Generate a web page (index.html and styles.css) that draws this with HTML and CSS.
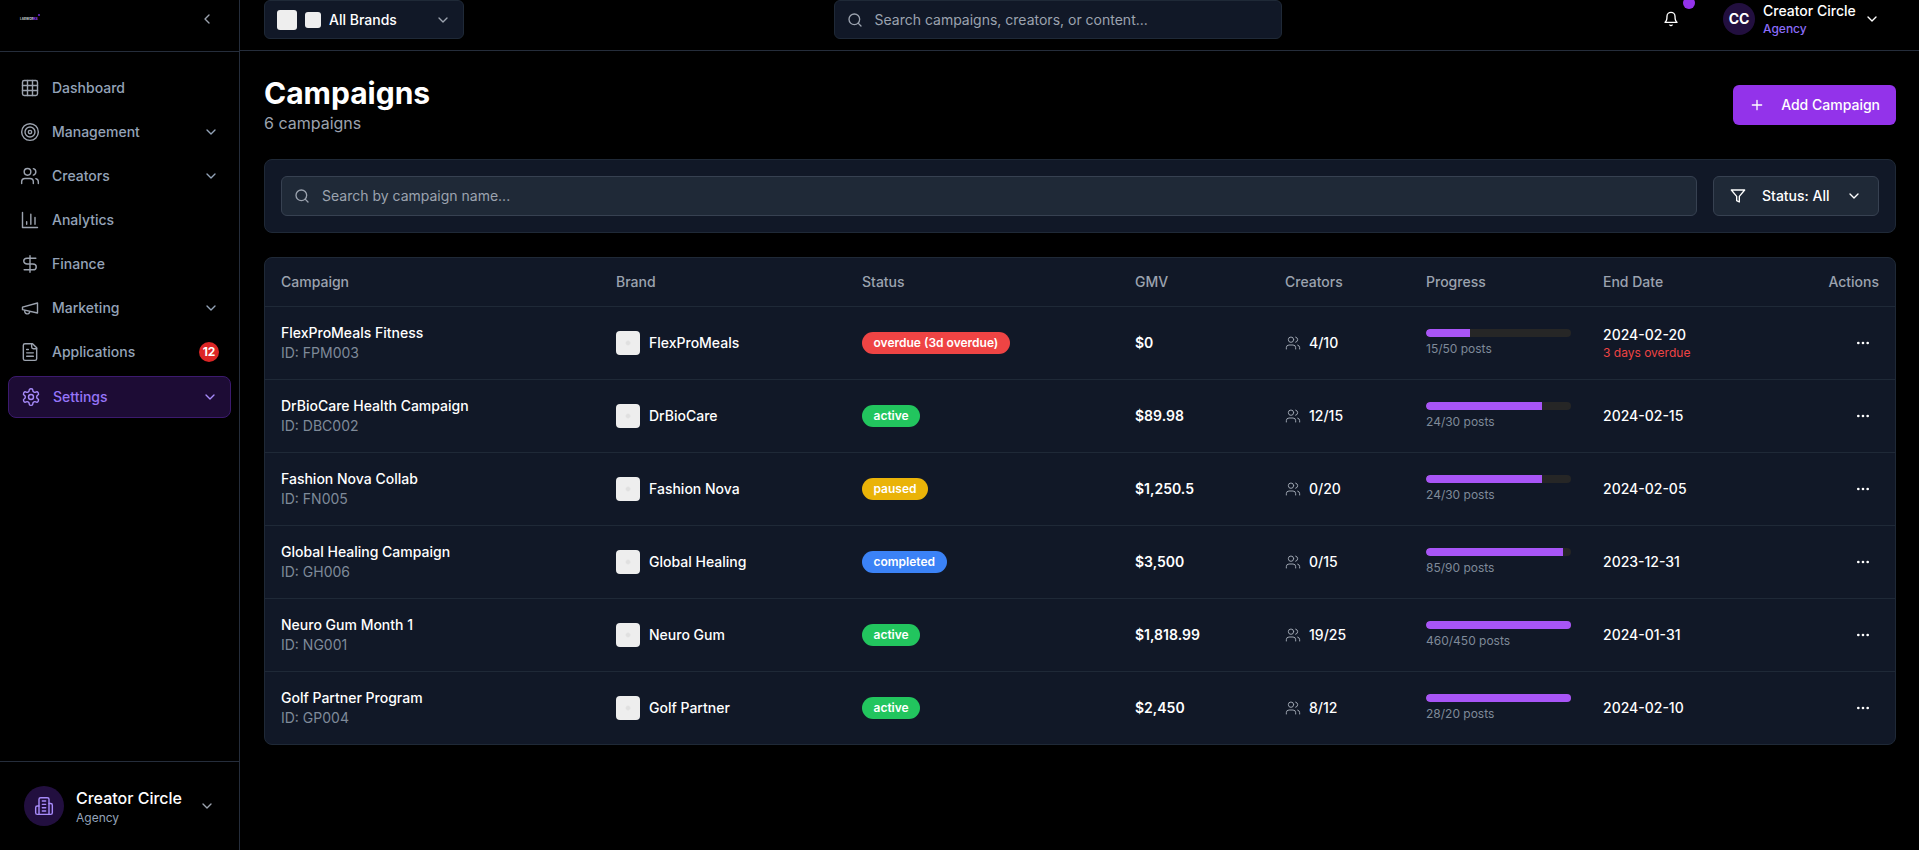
FILE: index.html
```html
<!DOCTYPE html>
<html lang="en">
<head>
<meta charset="utf-8">
<title>Campaigns</title>
<link rel="stylesheet" href="styles.css">
</head>
<body>
<svg class="defs" aria-hidden="true">
  <symbol id="i-grid" viewBox="0 0 24 24"><rect x="3" y="3" width="18" height="18" rx="2"/><path d="M3 9h18M3 15h18M9 3v18M15 3v18"/></symbol>
  <symbol id="i-target" viewBox="0 0 24 24"><circle cx="12" cy="12" r="10"/><circle cx="12" cy="12" r="6"/><circle cx="12" cy="12" r="2"/></symbol>
  <symbol id="i-users" viewBox="0 0 24 24"><path d="M16 21v-2a4 4 0 0 0-4-4H6a4 4 0 0 0-4 4v2"/><circle cx="9" cy="7" r="4"/><path d="M22 21v-2a4 4 0 0 0-3-3.87"/><path d="M16 3.13a4 4 0 0 1 0 7.75"/></symbol>
  <symbol id="i-chart" viewBox="0 0 24 24"><path d="M3 3v18h18"/><path d="M18 17V9M13 17V5M8 17v-3"/></symbol>
  <symbol id="i-dollar" viewBox="0 0 24 24"><path d="M12 2v20"/><path d="M19 5H8.5a4 3.5 0 0 0 0 7h7a4 3.5 0 0 1 0 7H5"/></symbol>
  <symbol id="i-mega" viewBox="0 0 24 24"><path d="m3 11 18-5v12L3 14v-3z"/><path d="M11.6 16.8a3 3 0 1 1-5.8-1.6"/></symbol>
  <symbol id="i-file" viewBox="0 0 24 24"><path d="M15 2H6a2 2 0 0 0-2 2v16a2 2 0 0 0 2 2h12a2 2 0 0 0 2-2V7Z"/><path d="M14 2v4a2 2 0 0 0 2 2h4"/><path d="M10 9H8M16 13H8M16 17H8"/></symbol>
  <symbol id="i-gear" viewBox="0 0 24 24"><path d="M12.22 2h-.44a2 2 0 0 0-2 2v.18a2 2 0 0 1-1 1.73l-.43.25a2 2 0 0 1-2 0l-.15-.08a2 2 0 0 0-2.73.73l-.22.38a2 2 0 0 0 .73 2.73l.15.1a2 2 0 0 1 1 1.72v.51a2 2 0 0 1-1 1.74l-.15.09a2 2 0 0 0-.73 2.73l.22.38a2 2 0 0 0 2.73.73l.15-.08a2 2 0 0 1 2 0l.43.25a2 2 0 0 1 1 1.73V20a2 2 0 0 0 2 2h.44a2 2 0 0 0 2-2v-.18a2 2 0 0 1 1-1.73l.43-.25a2 2 0 0 1 2 0l.15.08a2 2 0 0 0 2.73-.73l.22-.39a2 2 0 0 0-.73-2.73l-.15-.08a2 2 0 0 1-1-1.74v-.5a2 2 0 0 1 1-1.74l.15-.09a2 2 0 0 0 .73-2.73l-.22-.38a2 2 0 0 0-2.73-.73l-.15.08a2 2 0 0 1-2 0l-.43-.25a2 2 0 0 1-1-1.73V4a2 2 0 0 0-2-2z"/><circle cx="12" cy="12" r="3"/></symbol>
  <symbol id="i-down" viewBox="0 0 24 24"><path d="m6 9 6 6 6-6"/></symbol>
  <symbol id="i-left" viewBox="0 0 24 24"><path d="m15 18-6-6 6-6"/></symbol>
  <symbol id="i-search" viewBox="0 0 24 24"><circle cx="11" cy="11" r="8"/><path d="m21 21-4.3-4.3"/></symbol>
  <symbol id="i-bell" viewBox="0 0 24 24"><path d="M6 8a6 6 0 0 1 12 0c0 7 3 9 3 9H3s3-2 3-9"/><path d="M10.3 21a1.94 1.94 0 0 0 3.4 0"/></symbol>
  <symbol id="i-filter" viewBox="0 0 24 24"><path d="M22 3H2l8 9.46V19l4 2v-8.54L22 3z"/></symbol>
  <symbol id="i-plus" viewBox="0 0 24 24"><path d="M5 12h14M12 5v14"/></symbol>
  <symbol id="i-more" viewBox="0 0 24 24"><circle cx="5" cy="12" r="1"/><circle cx="12" cy="12" r="1"/><circle cx="19" cy="12" r="1"/></symbol>
  <symbol id="i-building" viewBox="0 0 24 24"><path d="M6 22V4a2 2 0 0 1 2-2h8a2 2 0 0 1 2 2v18Z"/><path d="M6 12H4a2 2 0 0 0-2 2v6a2 2 0 0 0 2 2h2"/><path d="M18 9h2a2 2 0 0 1 2 2v9a2 2 0 0 1-2 2h-2"/><path d="M10 6h4M10 10h4M10 14h4M10 18h4"/></symbol>
</svg>

<div class="app">
  <aside class="sidebar">
    <div class="side-head">
      <div class="logo"><span class="logo-dot"></span><span class="logo-text">LABWOR<b>KS</b></span></div>
      <svg class="ic16 muted"><use href="#i-left"/></svg>
    </div>
    <nav class="nav">
      <a class="nav-item"><svg class="ic20"><use href="#i-grid"/></svg><span class="nav-label">Dashboard</span></a>
      <a class="nav-item"><svg class="ic20"><use href="#i-target"/></svg><span class="nav-label">Management</span><svg class="ic16"><use href="#i-down"/></svg></a>
      <a class="nav-item"><svg class="ic20"><use href="#i-users"/></svg><span class="nav-label">Creators</span><svg class="ic16"><use href="#i-down"/></svg></a>
      <a class="nav-item"><svg class="ic20"><use href="#i-chart"/></svg><span class="nav-label">Analytics</span></a>
      <a class="nav-item"><svg class="ic20"><use href="#i-dollar"/></svg><span class="nav-label">Finance</span></a>
      <a class="nav-item"><svg class="ic20"><use href="#i-mega"/></svg><span class="nav-label">Marketing</span><svg class="ic16"><use href="#i-down"/></svg></a>
      <a class="nav-item"><svg class="ic20"><use href="#i-file"/></svg><span class="nav-label">Applications</span><span class="nav-badge">12</span></a>
      <a class="nav-item active"><svg class="ic20"><use href="#i-gear"/></svg><span class="nav-label">Settings</span><svg class="ic16"><use href="#i-down"/></svg></a>
    </nav>
    <div class="side-foot">
      <span class="foot-avatar"><svg class="ic20"><use href="#i-building"/></svg></span>
      <div class="foot-text">
        <div class="foot-name">Creator Circle</div>
        <div class="foot-role">Agency</div>
      </div>
      <svg class="ic16 muted"><use href="#i-down"/></svg>
    </div>
  </aside>

  <div class="main">
    <header class="topbar">
      <div class="brand-select">
        <span class="sq20"></span><span class="sq16"></span>
        <span class="brand-label">All Brands</span>
        <svg class="ic16 muted"><use href="#i-down"/></svg>
      </div>
      <div class="top-search">
        <svg class="ic16 muted"><use href="#i-search"/></svg>
        <span>Search campaigns, creators, or content...</span>
      </div>
      <div class="top-right">
        <div class="bell"><svg class="ic16 white"><use href="#i-bell"/></svg><span class="bell-dot"></span></div>
        <div class="user">
          <span class="user-avatar">CC</span>
          <div class="user-text">
            <div class="user-name">Creator Circle</div>
            <div class="user-role">Agency</div>
          </div>
          <svg class="ic16 white"><use href="#i-down"/></svg>
        </div>
      </div>
    </header>

    <main class="content">
      <div class="page-head">
        <div>
          <h1 class="title">Campaigns</h1>
          <p class="subtitle">6 campaigns</p>
        </div>
        <button class="add-btn"><svg class="ic16"><use href="#i-plus"/></svg><span>Add Campaign</span></button>
      </div>

      <div class="filters">
        <div class="filter-search">
          <svg class="ic16 muted"><use href="#i-search"/></svg>
          <span>Search by campaign name...</span>
        </div>
        <div class="status-btn">
          <svg class="ic16 white"><use href="#i-filter"/></svg>
          <span class="status-label">Status: All</span>
          <svg class="ic16 white"><use href="#i-down"/></svg>
        </div>
      </div>

      <div class="table-card">
        <table class="table">
          <colgroup>
            <col class="c-campaign"><col class="c-brand"><col class="c-status"><col class="c-gmv"><col class="c-creators"><col class="c-progress"><col class="c-date"><col>
          </colgroup>
          <thead>
            <tr><th>Campaign</th><th>Brand</th><th>Status</th><th>GMV</th><th>Creators</th><th>Progress</th><th>End Date</th><th class="right">Actions</th></tr>
          </thead>
          <tbody>
            <tr>
              <td><div class="name">FlexProMeals Fitness</div><div class="id">ID: FPM003</div></td>
              <td><div class="brand"><span class="brand-logo"></span>FlexProMeals</div></td>
              <td><span class="badge overdue">overdue (3d overdue)</span></td>
              <td class="gmv">$0</td>
              <td><div class="creators"><svg class="ic16 muted"><use href="#i-users"/></svg>4/10</div></td>
              <td><div class="track"><div class="fill" style="width:30%"></div></div><div class="posts">15/50 posts</div></td>
              <td><div class="date">2024-02-20</div><div class="late">3 days overdue</div></td>
              <td class="right"><span class="more"><svg class="ic16 white"><use href="#i-more"/></svg></span></td>
            </tr>
            <tr>
              <td><div class="name">DrBioCare Health Campaign</div><div class="id">ID: DBC002</div></td>
              <td><div class="brand"><span class="brand-logo"></span>DrBioCare</div></td>
              <td><span class="badge active-b">active</span></td>
              <td class="gmv">$89.98</td>
              <td><div class="creators"><svg class="ic16 muted"><use href="#i-users"/></svg>12/15</div></td>
              <td><div class="track"><div class="fill" style="width:80%"></div></div><div class="posts">24/30 posts</div></td>
              <td><div class="date">2024-02-15</div></td>
              <td class="right"><span class="more"><svg class="ic16 white"><use href="#i-more"/></svg></span></td>
            </tr>
            <tr>
              <td><div class="name">Fashion Nova Collab</div><div class="id">ID: FN005</div></td>
              <td><div class="brand"><span class="brand-logo"></span>Fashion Nova</div></td>
              <td><span class="badge paused">paused</span></td>
              <td class="gmv">$1,250.5</td>
              <td><div class="creators"><svg class="ic16 muted"><use href="#i-users"/></svg>0/20</div></td>
              <td><div class="track"><div class="fill" style="width:80%"></div></div><div class="posts">24/30 posts</div></td>
              <td><div class="date">2024-02-05</div></td>
              <td class="right"><span class="more"><svg class="ic16 white"><use href="#i-more"/></svg></span></td>
            </tr>
            <tr>
              <td><div class="name">Global Healing Campaign</div><div class="id">ID: GH006</div></td>
              <td><div class="brand"><span class="brand-logo"></span>Global Healing</div></td>
              <td><span class="badge completed">completed</span></td>
              <td class="gmv">$3,500</td>
              <td><div class="creators"><svg class="ic16 muted"><use href="#i-users"/></svg>0/15</div></td>
              <td><div class="track"><div class="fill" style="width:94.4%"></div></div><div class="posts">85/90 posts</div></td>
              <td><div class="date">2023-12-31</div></td>
              <td class="right"><span class="more"><svg class="ic16 white"><use href="#i-more"/></svg></span></td>
            </tr>
            <tr>
              <td><div class="name">Neuro Gum Month 1</div><div class="id">ID: NG001</div></td>
              <td><div class="brand"><span class="brand-logo"></span>Neuro Gum</div></td>
              <td><span class="badge active-b">active</span></td>
              <td class="gmv">$1,818.99</td>
              <td><div class="creators"><svg class="ic16 muted"><use href="#i-users"/></svg>19/25</div></td>
              <td><div class="track"><div class="fill" style="width:100%"></div></div><div class="posts">460/450 posts</div></td>
              <td><div class="date">2024-01-31</div></td>
              <td class="right"><span class="more"><svg class="ic16 white"><use href="#i-more"/></svg></span></td>
            </tr>
            <tr>
              <td><div class="name">Golf Partner Program</div><div class="id">ID: GP004</div></td>
              <td><div class="brand"><span class="brand-logo"></span>Golf Partner</div></td>
              <td><span class="badge active-b">active</span></td>
              <td class="gmv">$2,450</td>
              <td><div class="creators"><svg class="ic16 muted"><use href="#i-users"/></svg>8/12</div></td>
              <td><div class="track"><div class="fill" style="width:100%"></div></div><div class="posts">28/20 posts</div></td>
              <td><div class="date">2024-02-10</div></td>
              <td class="right"><span class="more"><svg class="ic16 white"><use href="#i-more"/></svg></span></td>
            </tr>
          </tbody>
        </table>
      </div>
    </main>
  </div>
</div>
</body>
</html>
```
FILE: styles.css
```css
* { box-sizing: border-box; }
html, body { margin: 0; height: 100%; }
body {
  background: #000;
  color: #fff;
  font-family: Inter, "Liberation Sans", sans-serif;
  font-size: 14px;
  line-height: 20px;
  overflow: hidden;
}
.defs { display: none; }
svg { fill: none; stroke: currentColor; stroke-linecap: round; stroke-linejoin: round; flex: none; display: block; }
.ic20 { width: 20px; height: 20px; stroke-width: 1.7; }
.ic16 { width: 16px; height: 16px; stroke-width: 2; }
.muted { color: #9ca3af; }
.white { color: #fff; }

.app { display: flex; width: 1920px; height: 850px; }

/* Sidebar */
.sidebar {
  width: 240px;
  flex: none;
  border-right: 1px solid #252d3b;
  display: flex;
  flex-direction: column;
  background: #000;
}
.side-head {
  height: 52px;
  flex: none;
  border-bottom: 1px solid #252d3b;
  padding: 11px 24px 0 20px;
  display: flex;
  align-items: flex-start;
  justify-content: space-between;
}
.logo { width: 20px; height: 16px; display: flex; flex-direction: column; align-items: flex-end; }
.logo-dot { width: 2px; height: 2px; border-radius: 50%; background: #6d28d9; margin: 3px 0 1px; }
.logo-text { font-size: 3px; line-height: 4px; font-weight: 700; color: #d1d5db; white-space: nowrap; width: 20px; letter-spacing: 0.05px; }
.logo-text b { color: #7c3aed; }
.nav { padding: 16px 8px 0; display: flex; flex-direction: column; gap: 4px; }
.nav-item {
  height: 40px;
  padding: 0 12px;
  display: flex;
  align-items: center;
  gap: 12px;
  color: #94a3b8;
  font-weight: 500;
  border-radius: 8px;
}
.nav-item .ic16 { color: #94a3b8; }
.nav-item .ic20 { color: #9ca3af; }
.nav-label { flex: 1; }
.nav-badge {
  width: 20px;
  height: 20px;
  border-radius: 50%;
  background: #dc2626;
  color: #fff;
  font-size: 12px;
  font-weight: 700;
  display: flex;
  align-items: center;
  justify-content: center;
}
.nav-item.active {
  height: 42px;
  background: #1d0c35;
  border: 1px solid #3c1a6e;
  color: #9675f9;
}
.nav-item.active .ic16,
.nav-item.active .ic20 { color: #a78bfa; }
.side-foot {
  margin-top: auto;
  height: 89px;
  border-top: 1px solid #252d3b;
  padding: 0 24px;
  display: flex;
  align-items: center;
  gap: 12px;
}
.foot-avatar {
  width: 40px;
  height: 40px;
  border-radius: 50%;
  background: #220f3f;
  color: #a78bfa;
  display: flex;
  align-items: center;
  justify-content: center;
}
.foot-text { flex: 1; }
.foot-name { font-size: 16px; line-height: 24px; font-weight: 500; }
.foot-role { font-size: 12px; line-height: 16px; color: #94a3b8; }

/* Main */
.main { flex: 1; min-width: 0; display: flex; flex-direction: column; }
.topbar {
  height: 51px;
  flex: none;
  border-bottom: 1px solid #252d3b;
  padding: 0 24px;
  display: flex;
  align-items: flex-start;
  justify-content: space-between;
}
.brand-select {
  width: 200px;
  height: 39px;
  background: #111827;
  border: 1px solid #1f2937;
  border-radius: 6px;
  padding: 0 12px;
  display: flex;
  align-items: center;
  gap: 8px;
}
.sq20 { width: 20px; height: 20px; border-radius: 3px; background: #eee; flex: none; }
.sq16 { width: 16px; height: 16px; border-radius: 3px; background: #eee; flex: none; }
.brand-label { flex: 1; font-weight: 500; }
.top-search {
  width: 448px;
  height: 39px;
  background: #111827;
  border: 1px solid #1f2937;
  border-radius: 6px;
  padding: 0 12px;
  display: flex;
  align-items: center;
  gap: 12px;
  color: #9ca3af;
}
.top-right { display: flex; align-items: flex-start; gap: 20px; }
.bell {
  position: relative;
  width: 40px;
  height: 38px;
  display: flex;
  align-items: center;
  justify-content: center;
}
.bell-dot {
  position: absolute;
  right: -4px;
  top: -3px;
  width: 12px;
  height: 12px;
  border-radius: 50%;
  background: #9333ea;
}
.user { height: 38px; width: 185px; padding: 0 16px 0 12px; display: flex; align-items: center; gap: 8px; }
.user-avatar {
  width: 32px;
  height: 32px;
  border-radius: 50%;
  background: #220f3f;
  font-weight: 700;
  display: flex;
  align-items: center;
  justify-content: center;
  flex: none;
}
.user-text { flex: 1; white-space: nowrap; }
.user-name { font-weight: 500; line-height: 20px; }
.user-role { font-size: 12px; font-weight: 500; line-height: 16px; color: #8b6cf8; }

.content { padding: 24px; }
.page-head { display: flex; align-items: center; justify-content: space-between; margin-bottom: 24px; }
.title { margin: 0; font-size: 30px; line-height: 36px; font-weight: 700; }
.subtitle { margin: 0; font-size: 16px; line-height: 24px; color: #9ca3af; }
.add-btn {
  height: 40px;
  border: 0;
  border-radius: 6px;
  background: #9333ea;
  color: #fff;
  font: 500 14px/20px Inter, "Liberation Sans", sans-serif;
  padding: 0 16px;
  display: flex;
  align-items: center;
  gap: 16px;
  white-space: nowrap;
}

.filters {
  height: 74px;
  background: #111827;
  border: 1px solid #1f2937;
  border-radius: 8px;
  padding: 16px;
  margin-bottom: 24px;
  display: flex;
  gap: 16px;
}
.filter-search {
  flex: 1;
  height: 40px;
  background: #1f2937;
  border: 1px solid #374151;
  border-radius: 6px;
  padding: 0 12px;
  display: flex;
  align-items: center;
  gap: 12px;
  color: #9ca3af;
}
.status-btn {
  width: 166px;
  height: 40px;
  background: #1f2937;
  border: 1px solid #374151;
  border-radius: 6px;
  padding: 0 16px;
  display: flex;
  align-items: center;
  gap: 16px;
  font-weight: 500;
}
.status-label { flex: 1; white-space: nowrap; }

.table-card {
  background: #111827;
  border: 1px solid #1f2937;
  border-radius: 8px;
  overflow: hidden;
}
.table { width: 100%; table-layout: fixed; border-collapse: separate; border-spacing: 0; }
.c-campaign { width: 335px; }
.c-brand { width: 246px; }
.c-status { width: 273px; }
.c-gmv { width: 150px; }
.c-creators { width: 141px; }
.c-progress { width: 177px; }
.c-date { width: 210px; }
th {
  height: 49px;
  padding: 0 16px;
  text-align: left;
  font-weight: 500;
  color: #9ca3af;
  border-bottom: 1px solid #1f2937;
}
td {
  height: 73px;
  padding: 0 16px;
  border-bottom: 1px solid #1f2937;
  vertical-align: middle;
}
tbody tr:last-child td { border-bottom: 0; height: 72px; }
.right { text-align: right; }
.name { font-weight: 500; line-height: 20px; }
.id { line-height: 20px; color: #7f8a99; }
.brand { display: flex; align-items: center; gap: 9px; font-weight: 500; }
.brand-logo {
  width: 24px;
  height: 24px;
  border-radius: 4px;
  background: radial-gradient(circle, #e0e0e0 1.5px, #eeeeee 3px);
  flex: none;
}
.badge {
  display: inline-block;
  height: 22px;
  line-height: 22px;
  padding: 0 11.5px;
  border-radius: 11px;
  font-size: 12px;
  font-weight: 600;
  color: #fff;
  vertical-align: middle;
}
.overdue { background: #ef4444; }
.active-b { background: #22c55e; }
.paused { background: #eab308; }
.completed { background: #3b82f6; }
.gmv { font-weight: 600; }
.creators { display: flex; align-items: center; gap: 8px; font-weight: 500; }
.creators .ic16 { stroke-width: 1.5; }
.track { width: 145px; height: 8px; border-radius: 4px; background: #262626; overflow: hidden; }
.fill { height: 100%; background: #a855f7; border-radius: 4px 0 0 4px; }
.posts { font-size: 12px; line-height: 16px; color: #7f8a99; margin-top: 4px; }
.date { font-weight: 500; line-height: 20px; }
.late { font-size: 12px; line-height: 16px; color: #ef4444; }
.more { display: inline-flex; padding: 8px; vertical-align: middle; }
.more .ic16 { fill: currentColor; }
```
